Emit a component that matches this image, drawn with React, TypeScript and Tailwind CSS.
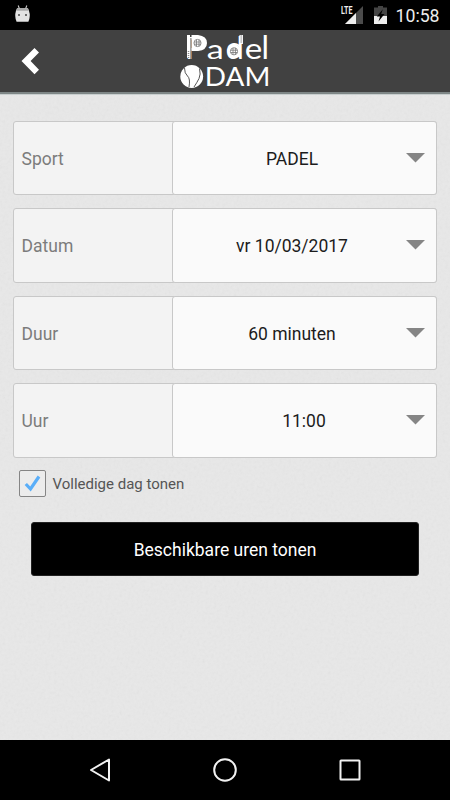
import React from "react";

const fields = [
  { label: "Sport", value: "PADEL", inset: "pl-[5px]" },
  { label: "Datum", value: "vr 10/03/2017", inset: "pl-[5px]" },
  { label: "Duur", value: "60 minuten", inset: "pl-[5px]" },
  { label: "Uur", value: "11:00", inset: "pl-[29px]" },
];

function StatusBar() {
  return (
    <div className="flex h-[30px] shrink-0 items-center bg-black pl-[14px] pr-[10px]">
      <svg width="18" height="20" viewBox="0 0 18 20" aria-hidden="true">
        <path d="M4.200 0.500 5.500 4M12.800 0.500 11.500 4" stroke="#c9c9c9" strokeWidth="1.100" />
        <path d="M3 3.300h11l1 2.400q1.800 5.600-.6 11H2.600Q.2 11.300 2 5.700z" fill="#e2e2e2" />
        <path d="M3.200 3.300h10.600l.8 2.400H2.400z" fill="#a8a8a8" />
        <circle cx="5" cy="10" r="1" fill="#444" />
        <circle cx="12" cy="10" r="1" fill="#444" />
      </svg>
      <div className="grow" />
      <svg width="26" height="22" viewBox="342 4 26 22" aria-hidden="true">
        <path d="M364 6v18h-18z" fill="#4b4b4b" />
        <path d="M357 13v11h-11z" fill="#ededed" />
        <text x="342" y="13.800" fontSize="10.500" fontWeight="700" textLength="11.500" lengthAdjust="spacingAndGlyphs" fill="#ededed" fontFamily="Roboto, sans-serif">LTE</text>
      </svg>
      <svg className="ml-[6px]" width="15" height="20" viewBox="373 5 15 20" aria-hidden="true">
        <path d="M378 6h5v1.600h4V16h-13V7.600h4z" fill="#444" />
        <path d="M374 16h13v8h-13z" fill="#ededed" />
        <path d="M382.800 9.300 376.800 16.500h3.200l-1.500 4.900 6-7.300h-3.300z" fill="#000" />
      </svg>
      <span className="ml-[7.500px] w-[44.500px] whitespace-nowrap pt-px text-[17.700px] leading-[30px] text-[#ededed]">10:58</span>
    </div>
  );
}

function Logo() {
  return (
    <svg className="overflow-visible" width="96" height="60" viewBox="178 31 96 60" role="img" aria-label="Padel Dam">
      <g fill="#fff" fontFamily="Lato, sans-serif">
        <text x="184.500" y="58.500" fontSize="31.500" textLength="22" lengthAdjust="spacingAndGlyphs">P</text>
        <text x="206.800" y="58.500" fontSize="27.500" textLength="17" lengthAdjust="spacingAndGlyphs">a</text>
        <text x="225.500" y="58.500" fontSize="31" textLength="18.500" lengthAdjust="spacingAndGlyphs">d</text>
        <text x="244.800" y="58.500" fontSize="28" textLength="17.500" lengthAdjust="spacingAndGlyphs">e</text>
        <text x="261.500" y="58.500" fontSize="32" textLength="7.500" lengthAdjust="spacingAndGlyphs">l</text>
        <text x="204.800" y="86" fontSize="27.500" textLength="65.500" lengthAdjust="spacingAndGlyphs">DAM</text>
      </g>
      <path d="M191.500 35h6.500q9 1 9 8t-9 8h-6.500z" fill="#fff" />
      <path d="M187 35h3v23h-3z" fill="#fff" />
      <path d="M190.900 38v21" stroke="#424242" strokeWidth="0.800" />
      <path d="M188.500 51v7" stroke="#888" strokeWidth="1.500" strokeDasharray="1 1" />
      <ellipse cx="234" cy="51.300" rx="6.500" ry="7" fill="#fff" />
      <path d="M241.200 35v9" stroke="#fff" strokeWidth="3.500" />
      <path d="M241.200 35.500v8" stroke="#888" strokeWidth="1.500" strokeDasharray="1 1" />
      <g fill="none" stroke="#777" strokeWidth="0.800">
        <circle cx="197.500" cy="43" r="3.600" />
        <path d="M196.500 39.500v7M199 39.500v7M194 42h7M194 44.200h7" />
        <circle cx="234" cy="51.300" r="3.600" />
        <path d="M233 47.800v7M235.400 47.800v7M230.500 50.200h7M230.500 52.500h7" />
      </g>
      <circle cx="191.700" cy="76.500" r="11.400" fill="#fff" />
      <g fill="none" stroke="#424242" strokeWidth="0.900">
        <path d="M184.500 68q0 5.500 3 8t1.500 11" />
        <path d="M199.500 68.500q1.500 6-.5 10t-5 8.500" />
      </g>
    </svg>
  );
}

function Header() {
  return (
    <header className="grid h-[64px] shrink-0 grid-cols-[180px_1fr_174px] border-b-[2px] border-[#7e8686] bg-[#414141]">
      <svg className="ml-[20px] mt-[17px]" width="22" height="30" viewBox="20 47 22 30" aria-hidden="true">
        <path d="M34.500 48 21.500 61 34.500 74.300 39 69.800 30.600 61 39 52.500z" fill="#fff" />
      </svg>
      <div className="-ml-[2px] mt-px">
        <Logo />
      </div>
    </header>
  );
}

function Field({ label, value, inset }: { label: string; value: string; inset: string }) {
  return (
    <div className="flex h-[74.500px] rounded-[3px] border border-[#c8c8c8] bg-[#f3f3f3]/95">
      <div className="flex w-[158px] items-center pl-[7.500px] pt-[2px] text-[17.500px] text-[#7c7c7c]">{label}</div>
      <div className="-my-px -mr-px flex grow items-center rounded-[3px] border border-[#c8c8c8] bg-[#fafafa] pr-[11px] text-[17.500px] text-[#1c1c1c]">
        <span className={`grow pt-[2px] text-center ${inset}`}>{value}</span>
        <svg width="19" height="10" viewBox="0 0 19 10" aria-hidden="true">
          <path d="M0 0h19L9.500 9.500z" fill="#858585" />
        </svg>
      </div>
    </div>
  );
}

export default function App() {
  return (
    <div className="flex h-[800px] w-[450px] flex-col overflow-hidden bg-[#e8e8e8] font-[Roboto,sans-serif]">
      <StatusBar />
      <Header />
      <main className="relative isolate grow border-t border-[#c9cfcf] px-[13px] pt-[25.500px]">
        <svg className="absolute inset-0 -z-10 h-full w-full opacity-[0.08]" aria-hidden="true">
          <filter id="paper">
            <feTurbulence type="fractalNoise" baseFrequency="0.35" numOctaves="3" />
            <feColorMatrix type="saturate" values="0" />
          </filter>
          <rect width="100%" height="100%" filter="url(#paper)" />
        </svg>
        <div className="flex flex-col gap-[13px]">
          {fields.map((f) => (
            <Field key={f.label} {...f} />
          ))}
        </div>
        <label className="mt-[12.500px] flex items-center pl-[6px]">
          <span className="flex h-[27px] w-[27px] items-center justify-center rounded-[2px] border border-[#858585] bg-[#ececec]">
            <svg width="17" height="17" viewBox="0 0 17 17" aria-hidden="true">
              <path d="m1.800 9 4.700 5L15 1.500" fill="none" stroke="#5aaef8" strokeWidth="3.200" />
            </svg>
          </span>
          <span className="ml-[6.500px] pt-[2px] text-[15px] text-[#555]">Volledige dag tonen</span>
        </label>
        <button className="ml-[18px] mt-[25px] block h-[54px] w-[388px] rounded-[3px] border border-[#222] bg-black pt-[2px] text-[17.500px] text-white">
          Beschikbare uren tonen
        </button>
      </main>
      <nav className="flex h-[60px] shrink-0 items-center justify-between bg-black px-[88px]">
        <svg width="24" height="26" viewBox="0 0 24 26" fill="none" stroke="#f2f2f2" strokeWidth="2" strokeLinejoin="round" aria-hidden="true">
          <path d="M21 2.500v21L3 13z" />
        </svg>
        <svg width="26" height="26" viewBox="0 0 26 26" fill="none" stroke="#f2f2f2" strokeWidth="2" aria-hidden="true">
          <circle cx="13" cy="13" r="10.800" />
        </svg>
        <svg width="24" height="24" viewBox="0 0 24 24" fill="none" stroke="#f2f2f2" strokeWidth="2" strokeLinejoin="round" aria-hidden="true">
          <rect x="2.500" y="2.500" width="19" height="19" rx="0.500" />
        </svg>
      </nav>
    </div>
  );
}
